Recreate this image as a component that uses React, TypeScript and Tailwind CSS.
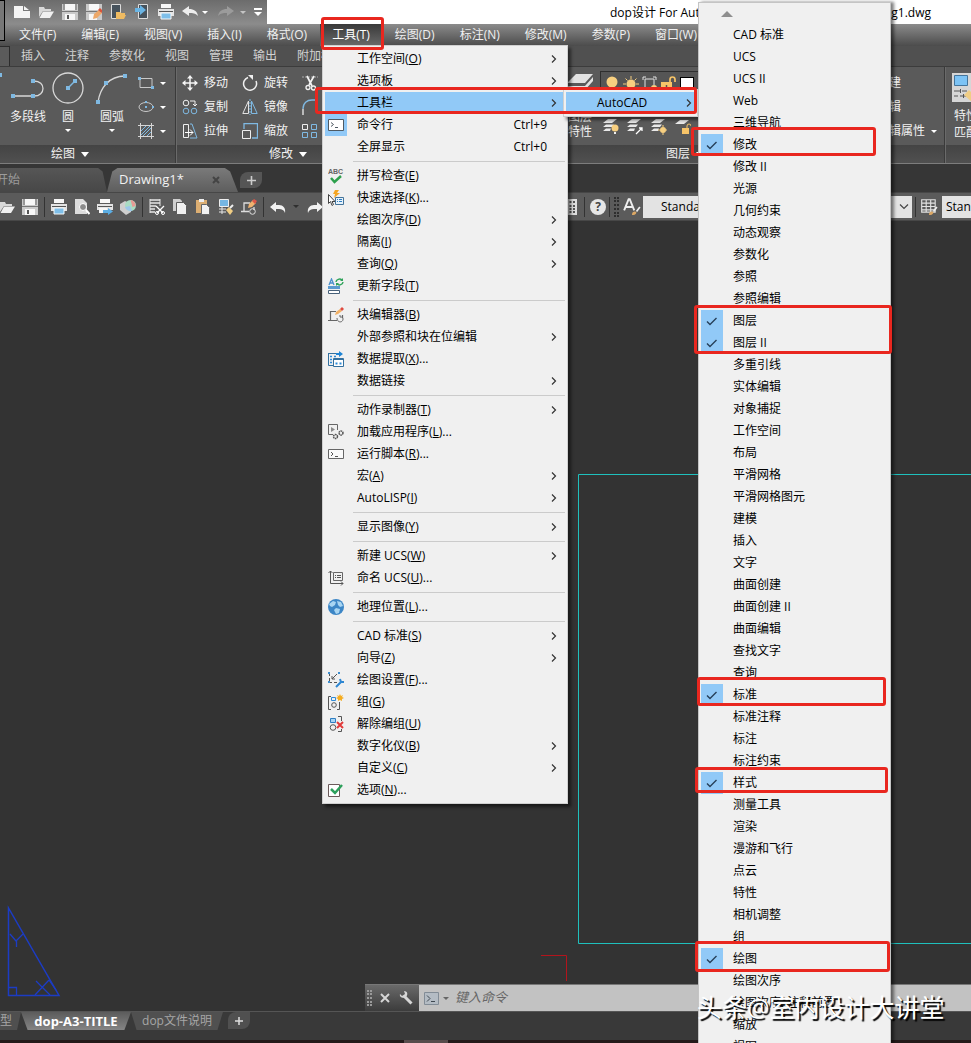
import type { ReactNode } from 'react';
import clsx from 'clsx';

interface MenuEntry {
  label: string;
  icon?: ReactNode;
  shortcut?: string;
  submenu?: boolean;
  active?: boolean;
  checked?: boolean;
}

interface IconProps {
  size?: number;
  children: ReactNode;
}

function Icon({ size = 16, children }: IconProps) {
  return (
    <svg width={size} height={size} viewBox="0 0 16 16" fill="none" className="shrink-0" aria-hidden="true">
      {children}
    </svg>
  );
}

function Caret({ className = 'border-t-white' }: { className?: string }) {
  return <span className={clsx('h-0 w-0 shrink-0 border-x-[3px] border-t-[3px] border-x-transparent', className)} />;
}

/* ---------- Toolbar icons ---------- */

const newIcon = (
  <Icon>
    <path d="M0 2h9v5h7v7H0z" fill="#f4f4f4" />
    <path d="M10 2l5 4h-5z" fill="#f4f4f4" />
  </Icon>
);

const openIcon = (
  <Icon>
    <path d="M1 13V3h5l1 2h6v2H5z" fill="#d8d8d8" />
    <path d="M5 7.500h11L12 14H1.500z" fill="#f0f0f0" />
  </Icon>
);

const saveIcon = (
  <Icon>
    <path d="M0 0h16v16H0z" fill="#c9c9c9" />
    <path d="M3 0h10v6H3z" fill="#f7f7f7" />
    <path d="M0 7.500h16" stroke="#777" />
    <path d="M3 10h10v6H3z" fill="#f7f7f7" />
    <path d="M5 11h2v4H5z" fill="#555" />
    <path d="M2 0v6M14 0v6" stroke="#666" />
  </Icon>
);

const saveAsIcon = (
  <Icon>
    <path d="M0 0h16v16H0z" fill="#c9c9c9" />
    <path d="M3 0h10v6H3z" fill="#f7f7f7" />
    <path d="M0 7.500h16" stroke="#777" />
    <path d="M3 10h8v6H3z" fill="#f7f7f7" />
    <path d="M7 15l1-5 5-4 3 3-5 5z" fill="#eda869" />
    <path d="M12 6l2-2 2 2v3z" fill="#d9533c" />
  </Icon>
);

const mobileOpenIcon = (
  <Icon>
    <path d="M1.500.500h9v14h-9z" fill="#46525c" stroke="#ddd" />
    <path d="M6 15V8h4l1 1h4v2h1l-2 4z" fill="#efbb62" />
  </Icon>
);

const mobileSendIcon = (
  <Icon>
    <path d="M4.500.500h9v14h-9z" fill="#46525c" stroke="#ddd" />
    <path d="M1 4h5V1l6 5-6 5V8H1z" fill="#69b4e4" />
  </Icon>
);

const printIcon = (
  <Icon>
    <path d="M3 0h10v4H3z" fill="#f7f7f7" />
    <path d="M0 5h16v7H0z" fill="#e4e4e4" />
    <path d="M1 7.500h14" stroke="#555" />
    <path d="M3 9h10v6H3z" fill="#7fbfe9" stroke="#f7f7f7" />
  </Icon>
);

const previewIcon = (
  <Icon>
    <path d="M1 0h8l4 4v11H1z" fill="#dcdcdc" />
    <circle cx="9" cy="8" r="3.500" fill="#8a8a8a" stroke="#fff" />
    <path d="M12 11l3.500 4" stroke="#fff" strokeWidth="2" />
  </Icon>
);

const plotIcon = (
  <Icon>
    <path d="M3 0h10v4H3z" fill="#f7f7f7" />
    <path d="M0 5h16v6H0z" fill="#e4e4e4" />
    <path d="M1 7.500h14" stroke="#555" />
    <path d="M2 9h8v5H2z" fill="#f7f7f7" />
    <path d="M6 11h5V9l5 3.500-5 3.500v-2H6z" fill="#5caee4" />
  </Icon>
);

const sphereIcon = (
  <Icon>
    <path d="M0 5l5-3 6 3v8l-5 3-6-5z" fill="#cfcfcf" />
    <circle cx="10.500" cy="6.500" r="5.500" fill="#a9dcc4" />
    <path d="M10.500 1a5.500 5.500 0 0 1 5 6l-3 1z" fill="#e79a94" />
    <path d="M5 8l5-1 2 5a6 6 0 0 1-7-4z" fill="#9cc7ea" />
  </Icon>
);

const cutIcon = (
  <Icon>
    <path d="M1 1h10M1 4h10M1 7h6M1 10h5M1 13h5" stroke="#e6e6e6" strokeWidth="1.500" />
    <path d="M1 0v14M11 0v7" stroke="#e6e6e6" />
    <path d="M7 7l7 7M15 7l-7 7" stroke="#fff" strokeWidth="1.300" />
    <circle cx="8" cy="14" r="1.500" stroke="#fff" />
    <circle cx="14" cy="14" r="1.500" stroke="#fff" />
  </Icon>
);

const copyIcon = (
  <Icon>
    <path d="M1 0h7l2 2v10H1z" fill="#cfcfcf" />
    <path d="M4.500 3.500h7l3 3v9h-10z" fill="#f0f0f0" stroke="#5b5b5b" />
  </Icon>
);

const pasteIcon = (
  <Icon>
    <path d="M1 1h11v13H1z" fill="#dcae72" />
    <path d="M4 0h5v3H4z" fill="#eee" />
    <path d="M6.500 5.500h5l3 3v7h-8z" fill="#f2f2f2" stroke="#666" />
  </Icon>
);

const matchIcon = (
  <Icon>
    <path d="M1.500.500h9v7h-9z" fill="#76b7e3" stroke="#eee" />
    <path d="M1 10h7M1 13h7M4 8v7" stroke="#e8e8e8" />
    <path d="M8 11l3-3 4 4-3 4z" fill="#f0cd84" />
    <path d="M12 9l3-3" stroke="#eee" strokeWidth="2" />
  </Icon>
);

const blockEditIcon = (
  <Icon>
    <path d="M3 12V4h6M0 12.500h8M13 8v3" stroke="#ddd" strokeWidth="1.300" />
    <circle cx="11.500" cy="12.500" r="2.800" stroke="#ddd" />
    <path d="M7 9l1-4 4-4 3 3-4 4z" fill="#efb26f" />
    <path d="M11 2l2-2 3 2-2 3z" fill="#dc5749" />
  </Icon>
);

const undoIcon = (
  <Icon>
    <path d="M0 8l6-5v3h3c4 0 7 3 6 8-1-3-3-4-6-4H6v3z" fill="#f2f2f2" />
  </Icon>
);

const undoQuickIcon = (
  <Icon>
    <path d="M0 7l7-5v3c5 0 8 2 9 7-3-3-5-3-9-3v3z" fill="#ededed" />
  </Icon>
);

const redoQuickIcon = (
  <Icon>
    <path d="M16 7L9 2v3C4 5 1 7 0 12c3-3 5-3 9-3v3z" fill="#9b9b9b" />
  </Icon>
);

const redoIcon = (
  <Icon>
    <path d="M16 8l-6-5v3H7c-4 0-7 3-6 8 1-3 3-4 6-4h3v3z" fill="#f2f2f2" />
  </Icon>
);

const calcIcon = (
  <Icon>
    <path d="M1 0h13v16H1z" fill="#ddd" />
    <path d="M3 3h9M3 7h9M3 10h9M3 13h9" stroke="#555" strokeWidth="2" strokeDasharray="2 1.500" />
  </Icon>
);

const textStyleIcon = (
  <Icon size={18}>
    <path d="M1 11L5 1h1l4 10M2.500 8h6" stroke="#eee" strokeWidth="1.700" />
    <path d="M8 15c0-3 2-3 3-3l1 1c-1 2-2 2-4 2z" fill="#dba765" />
    <path d="M12 12l3-4" stroke="#eee" strokeWidth="1.500" />
  </Icon>
);

const tableStyleIcon = (
  <Icon size={18}>
    <path d="M1.500 1.500h12v11h-12zM1.500 4.500h12M1.500 7.500h12M1.500 10.500h12M5.500 1.500v11M9.500 1.500v11" stroke="#e2e2e2" />
    <path d="M8 15c0-3 2-3 3-3l1 1c-1 2-2 2-4 2z" fill="#dba765" />
    <path d="M12 12l3-4" stroke="#eee" strokeWidth="1.500" />
  </Icon>
);

/* ---------- Ribbon icons ---------- */

const moveIcon = (
  <Icon>
    <path d="M8 1v14M1 8h14" stroke="#f4f4f4" strokeWidth="1.500" />
    <path d="M8 0l3 3.500H5zM8 16l3-3.500H5zM0 8l3.500-3v6zM16 8l-3.500-3v6z" fill="#f4f4f4" />
  </Icon>
);

const copyObjectIcon = (
  <Icon>
    <circle cx="4" cy="4" r="2.800" stroke="#f0f0f0" />
    <circle cx="4" cy="12" r="2.800" stroke="#7fb9e2" />
    <circle cx="12" cy="12" r="2.800" stroke="#7fb9e2" />
    <path d="M8 2h5v5M11 5l2 2 2-2" stroke="#f0f0f0" />
  </Icon>
);

const stretchIcon = (
  <Icon>
    <path d="M1.500 1.500h5v13h-5z" stroke="#eee" />
    <path d="M8 1h2l5 14H8" stroke="#7fb9e2" />
    <path d="M3 9.500h8M8 6.500l3 3-3 3" stroke="#fff" />
  </Icon>
);

const rotateIcon = (
  <Icon>
    <path d="M6 2.500A6.500 6.500 0 1 0 14 6" stroke="#f0f0f0" strokeWidth="1.500" />
    <path d="M6 0h5v5z" fill="#f0f0f0" />
  </Icon>
);

const mirrorIcon = (
  <Icon>
    <path d="M6.500 2v12.500H.800z" stroke="#e2e2e2" />
    <path d="M9.500 2v12.500h5.700z" stroke="#7fb9e2" />
    <path d="M8 0v16" stroke="#7fb9e2" strokeDasharray="2 1" />
  </Icon>
);

const scaleIcon = (
  <Icon>
    <path d="M2 6V.500h13.500V15H10" stroke="#7fb9e2" strokeWidth="1.300" />
    <path d="M.500 7.500h8v8h-8z" stroke="#eee" />
  </Icon>
);

const trimIcon = (
  <Icon>
    <path d="M0 2h16" stroke="#aaa" strokeDasharray="2 1" />
    <path d="M5 1l5 10M12 1L7 10" stroke="#f4f4f4" strokeWidth="1.700" />
    <circle cx="6" cy="12.500" r="2" stroke="#f4f4f4" strokeWidth="1.300" />
    <circle cx="11.500" cy="13" r="2" stroke="#f4f4f4" strokeWidth="1.300" />
  </Icon>
);

const filletIcon = (
  <Icon>
    <path d="M1 10C1 4 5 1 10 1h6" stroke="#7fb9e2" strokeWidth="1.300" />
    <path d="M1 10v6" stroke="#eee" strokeWidth="1.300" />
  </Icon>
);

const arrayIcon = (
  <Icon>
    <path d="M.500 1.500h5v5h-5z" stroke="#eee" />
    <path d="M9.500 1.500h5v5h-5zM.500 9.500h5v5h-5zM9.500 9.500h5v5h-5z" stroke="#7fb9e2" />
  </Icon>
);

const rectangleIcon = (
  <Icon>
    <path d="M2 3.500h12v9H2z" stroke="#c9c9c9" />
    <path d="M0 2h3v3H0zM13 11h3v3h-3z" fill="#7fb9e2" />
  </Icon>
);

const ellipseIcon = (
  <Icon>
    <ellipse cx="8" cy="8" rx="7" ry="4.500" stroke="#c9c9c9" />
    <path d="M7 2h2v2H7zM7 7h2v2H7zM14 7h2v2h-2z" fill="#7fb9e2" />
  </Icon>
);

const hatchIcon = (
  <Icon>
    <path d="M0 2.500h16M0 13.500h16M2.500 0v16M13.500 0v16" stroke="#d6d6d6" />
    <path d="M3 8l5-5M3 12l9-9M5 13l8-8M9 13l4-4" stroke="#7fb9e2" />
  </Icon>
);

const bulbIcon = (
  <Icon>
    <circle cx="8" cy="6" r="5.500" fill="#f7cf80" />
    <path d="M6 12h4v3H6z" fill="#e8e8e8" />
  </Icon>
);

const sunIcon = (
  <Icon>
    <circle cx="8" cy="8" r="4.500" fill="#f7cf80" />
    <path d="M8 0v3M8 13v3M0 8h3M13 8h3M2.500 2.500l2 2M11.500 11.500l2 2M13.500 2.500l-2 2M4.500 11.500l-2 2" stroke="#f7cf80" />
  </Icon>
);

const viewportSunIcon = (
  <Icon>
    <path d="M3 3h9v6M3 3v9h5" stroke="#e3e3e3" />
    <path d="M1 4V1h3M11 1h3v3M1 11v3h3" stroke="#e3e3e3" />
    <circle cx="12" cy="12" r="3" fill="#f7cf80" />
  </Icon>
);

const lockIcon = (
  <Icon>
    <path d="M0 6h11v9H0z" fill="#f7c468" />
    <path d="M9 6V3.500a2.500 2.500 0 0 1 5 0V6" stroke="#f7c468" strokeWidth="1.700" />
    <path d="M5.500 9v3" stroke="#555" strokeWidth="1.500" />
  </Icon>
);

function LayerIcon({ children }: { children?: ReactNode }) {
  return (
    <Icon>
      <path d="M5 0h9l-5 4H0zM3 5.500h8l-2 2.500H0zM3 9.500h5l-1 2.500H0z" fill="#e9e9e9" />
      {children}
    </Icon>
  );
}

/* ---------- Tools menu icons ---------- */

const promptIcon = (
  <Icon>
    <path d="M.500 2.500h15v11H.500z" fill="#fff" stroke="#4f5a63" />
    <path d="M3 5.500l2.500 2L3 9.500M7 10.500h3" stroke="#4f5a63" />
  </Icon>
);

const scriptIcon = (
  <Icon>
    <path d="M.500 3.500h15v9H.500z" fill="#fafafa" stroke="#666" />
    <path d="M3 6l2 2-2 2M7 10.500h3" stroke="#555" />
  </Icon>
);

const spellIcon = (
  <Icon>
    <text x="0" y="6" fontSize="7" fontWeight="700" fill="#666" fontFamily="Liberation Sans, sans-serif">
      ABC
    </text>
    <path d="M3 10l3.500 4L13 8" stroke="#2da04c" strokeWidth="2.500" />
  </Icon>
);

const quickSelectIcon = (
  <Icon>
    <path d="M7 0h4L9 3h3L6 8l1-4H5z" fill="#f5a623" />
    <path d="M.500 4.500v9l2-2 1.500 4 1.500-1-1.500-3h3z" fill="#fff" stroke="#444" />
    <path d="M7.500 7.500h8v7h-8z" fill="#e6f2fb" stroke="#44749b" />
    <path d="M9 9.500h1M11 9.500h3M9 11.500h1M11 11.500h3" stroke="#2e7ec2" />
  </Icon>
);

const updateFieldIcon = (
  <Icon>
    <path d="M1 7l2.500-6L6 7M2 5h3" stroke="#4a90cc" strokeWidth="1.300" />
    <path d="M8 4a3.500 3 0 0 1 6-2M15 4a3.500 3 0 0 1-6 2" stroke="#2fa35a" strokeWidth="1.400" />
    <path d="M15 0v3h-3zM8 8V5h3z" fill="#2fa35a" />
    <path d="M0 8h12v3H0z" fill="#5b9bd0" />
    <path d="M.500 12.500h11v3H.500z" fill="#fff" stroke="#47617a" />
  </Icon>
);

const blockMenuIcon = (
  <Icon>
    <path d="M2.500 13V4.500H8M0 13.500h9M14.500 8v3" stroke="#666" strokeWidth="1.200" />
    <path d="M9 11c0 5 6 5 6 1 0-2-1-2-3-2v-2" stroke="#666" />
    <path d="M7 8l1-3 4-3 2 2-4 3z" fill="#f2b166" />
    <path d="M12 2l2-2 2 2-2 2z" fill="#e04a3f" />
  </Icon>
);

const extractIcon = (
  <Icon>
    <path d="M.500 2v12.500H5M.500 2.500h11" stroke="#33709f" />
    <path d="M2 5.500h2M6 5.500h2M2 8.500h2M2 11.500h2" stroke="#2e8bd8" strokeWidth="1.500" />
    <path d="M8 2h3V0l4 3-4 3V4H8z" fill="#1e84d4" />
    <path d="M5.500 7.500h10v8h-10z" fill="#fff" stroke="#33709f" />
    <path d="M5 8h11v1H5z" fill="#33709f" />
    <path d="M7.500 12.500h2M11.500 12.500h2" stroke="#2e8bd8" strokeWidth="2" />
  </Icon>
);

const loadAppIcon = (
  <Icon>
    <path d="M5 10.500H.500V.500h9V6" stroke="#666" />
    <path d="M3 3l4 2.500L3 8z" fill="#8a8a8a" />
    <circle cx="7.500" cy="12.500" r="2" stroke="#555" strokeWidth="1.500" strokeDasharray="1.500 .500" />
    <circle cx="13" cy="9" r="2" stroke="#555" strokeWidth="1.500" strokeDasharray="1.500 .500" />
  </Icon>
);

const namedUcsIcon = (
  <Icon>
    <path d="M2.500 1v12.500H15M.500 3l2-2 2 2M13 11.500l2 2-2 2" stroke="#555" />
    <path d="M5.500 2.500h9v8h-9z" stroke="#666" />
    <path d="M7 5.500h1M9 5.500h4M7 7.500h1M9 7.500h4" stroke="#555" />
  </Icon>
);

const globeIcon = (
  <Icon>
    <circle cx="8" cy="8" r="8" fill="#3c86c6" />
    <path d="M1 5l4-3 3 1-1 3-3 2-2-1zM9 2l4 1 2 4-3 1-2-2zM8 9l4 1-1 4-3 1-2-4z" fill="#a8d5f2" />
  </Icon>
);

const draftSettingsIcon = (
  <Icon>
    <path d="M1.500 1v9M1 10.500h8" stroke="#555" strokeDasharray="3 2" />
    <path d="M9 2L4 7M4 4v3h3" stroke="#555" />
    <path d="M0 0h2v2H0zM10 0h2v2h-2zM0 9h2v2H0z" fill="#3f8fd0" />
    <path d="M8 15l5-5M12 7l1 3h3" stroke="#2f87d2" strokeWidth="2" />
  </Icon>
);

const groupIcon = (
  <Icon>
    <path d="M3 2.500H.500v13H3M9 15.500h2.500V8" stroke="#555" />
    <path d="M3.500 3.500h4v3h-4z" stroke="#2e8bd8" />
    <circle cx="6" cy="11" r="2.300" stroke="#555" />
    <path d="M12 0l1 2 2-1-1 2 2 1-2 1v2l-2-1-2 1V5L8 4l2-1-1-2 2 1z" fill="#f5ad20" />
  </Icon>
);

const ungroupIcon = (
  <Icon>
    <path d="M10 .500h3.500V5M10 15.500h3.500V13" stroke="#555" />
    <path d="M2.500 2.500h5v4h-5z" fill="#a8d5f5" stroke="#2e7ec2" />
    <circle cx="5" cy="11.500" r="2.800" stroke="#555" />
    <path d="M9 6l6 6M15 6l-6 6" stroke="#e23b3b" strokeWidth="2" />
  </Icon>
);

const optionsIcon = (
  <Icon>
    <path d="M.500 2.500h11v12H.500z" fill="#fff" stroke="#6b5a5a" />
    <path d="M3 7l4 4 7-8" stroke="#2da05c" strokeWidth="2.500" />
  </Icon>
);

/* ---------- Data ---------- */

const menuTitles = [
  '文件(F)',
  '编辑(E)',
  '视图(V)',
  '插入(I)',
  '格式(O)',
  '工具(T)',
  '绘图(D)',
  '标注(N)',
  '修改(M)',
  '参数(P)',
  '窗口(W)',
];

const ribbonTabs = ['插入', '注释', '参数化', '视图', '管理', '输出', '附加模块'];

// Each inner list is one group, groups are split by a separator line
const toolsMenu: MenuEntry[][] = [
  [
    { label: '工作空间(O)', submenu: true },
    { label: '选项板', submenu: true },
    { label: '工具栏', submenu: true, active: true },
    { label: '命令行', shortcut: 'Ctrl+9', icon: promptIcon, checked: true },
    { label: '全屏显示', shortcut: 'Ctrl+0' },
  ],
  [
    { label: '拼写检查(E)', icon: spellIcon },
    { label: '快速选择(K)...', icon: quickSelectIcon },
    { label: '绘图次序(D)', submenu: true },
    { label: '隔离(I)', submenu: true },
    { label: '查询(Q)', submenu: true },
    { label: '更新字段(T)', icon: updateFieldIcon },
  ],
  [
    { label: '块编辑器(B)', icon: blockMenuIcon },
    { label: '外部参照和块在位编辑', submenu: true },
    { label: '数据提取(X)...', icon: extractIcon },
    { label: '数据链接', submenu: true },
  ],
  [
    { label: '动作录制器(T)', submenu: true },
    { label: '加载应用程序(L)...', icon: loadAppIcon },
    { label: '运行脚本(R)...', icon: scriptIcon },
    { label: '宏(A)', submenu: true },
    { label: 'AutoLISP(I)', submenu: true },
  ],
  [{ label: '显示图像(Y)', submenu: true }],
  [
    { label: '新建 UCS(W)', submenu: true },
    { label: '命名 UCS(U)...', icon: namedUcsIcon },
  ],
  [{ label: '地理位置(L)...', icon: globeIcon }],
  [
    { label: 'CAD 标准(S)', submenu: true },
    { label: '向导(Z)', submenu: true },
    { label: '绘图设置(F)...', icon: draftSettingsIcon },
    { label: '组(G)', icon: groupIcon },
    { label: '解除编组(U)', icon: ungroupIcon },
    { label: '数字化仪(B)', submenu: true },
    { label: '自定义(C)', submenu: true },
    { label: '选项(N)...', icon: optionsIcon },
  ],
];

const toolbarNames = [
  'CAD 标准', 'UCS', 'UCS II', 'Web', '三维导航', '修改', '修改 II', '光源', '几何约束', '动态观察',
  '参数化', '参照', '参照编辑', '图层', '图层 II', '多重引线', '实体编辑', '对象捕捉', '工作空间', '布局',
  '平滑网格', '平滑网格图元', '建模', '插入', '文字', '曲面创建', '曲面创建 II', '曲面编辑', '查找文字', '查询',
  '标准', '标准注释', '标注', '标注约束', '样式', '测量工具', '渲染', '漫游和飞行', '点云', '特性',
  '相机调整', '组', '绘图', '绘图次序', '绘图次序, 注释前置', '缩放', '视图',
];

const visibleToolbars = ['修改', '图层', '图层 II', '标准', '样式', '绘图'];

const highlightBoxes = [
  'left-[321px] top-[17px] w-[63px] h-[33px]',
  'left-[315px] top-[87px] w-[382px] h-[27px]',
  'left-[691px] top-[127px] w-[185px] h-[29px]',
  'left-[694px] top-[305px] w-[198px] h-[49px]',
  'left-[697px] top-[677px] w-[189px] h-[29px]',
  'left-[695px] top-[767px] w-[193px] h-[26px]',
  'left-[695px] top-[941px] w-[195px] h-[31px]',
];

/* ---------- Menus ---------- */

// Underlines the access key in labels such as "查询(Q)"
function AccessLabel({ text }: { text: string }) {
  const match = text.match(/^(.*\()([A-Z])(\).*)$/);
  if (!match) return <>{text}</>;
  return (
    <>
      {match[1]}
      <u>{match[2]}</u>
      {match[3]}
    </>
  );
}

function Chevron() {
  return (
    <svg width="6" height="8" viewBox="0 0 6 8" fill="none" className="shrink-0" aria-hidden="true">
      <path d="M1 .500L4.500 4 1 7.500" stroke="#333" strokeWidth="1.200" />
    </svg>
  );
}

function MenuRow({ entry }: { entry: MenuEntry }) {
  return (
    <button
      role="menuitem"
      className={clsx('flex h-[22px] w-full items-center text-left', entry.active && 'bg-[#91c9f7]')}
    >
      <span className={clsx('flex h-full w-[22px] items-center justify-center', entry.checked && 'bg-[#91c9f7]')}>
        {entry.icon}
      </span>
      <span className="ml-[10px] flex-1">
        <AccessLabel text={entry.label} />
      </span>
      {entry.shortcut && <span className="pr-[18px]">{entry.shortcut}</span>}
      {entry.submenu && (
        <span className="pr-2">
          <Chevron />
        </span>
      )}
    </button>
  );
}

function ToolsMenu() {
  return (
    <div
      role="menu"
      className="absolute left-[322px] top-[45px] w-[246px] border border-[#d0d0d0] bg-[#f0f0f0] p-[2px] shadow-[3px_3px_3px_rgba(0,0,0,0.5)]"
    >
      {toolsMenu.map((group, index) => (
        <div key={index}>
          {index > 0 && (
            <div className="ml-7 flex h-[7px] items-center">
              <div className="h-px w-full bg-[#cbcbcb]" />
            </div>
          )}
          {group.map((entry) => (
            <MenuRow key={entry.label} entry={entry} />
          ))}
        </div>
      ))}
    </div>
  );
}

function AutoCadMenu() {
  return (
    <div
      role="menu"
      className="absolute left-[563px] top-[89px] w-[135px] border border-[#d0d0d0] bg-[#f0f0f0] p-[2px] shadow-[3px_3px_3px_rgba(0,0,0,0.5)]"
    >
      <button role="menuitem" className="flex h-[22px] w-full items-center bg-[#91c9f7] pl-[31px] pr-[3px] text-left">
        <span className="flex-1">AutoCAD</span>
        <Chevron />
      </button>
    </div>
  );
}

function ToolbarListMenu() {
  return (
    <div
      role="menu"
      className="absolute bottom-0 left-[698px] top-[2px] w-[193px] overflow-hidden border border-b-0 border-[#c4c4c4] bg-[#f0f0f0] px-[2px] shadow-[3px_0_3px_rgba(0,0,0,0.5)]"
    >
      <div className="flex h-[21px] items-center pl-5">
        <span className="h-0 w-0 border-x-[6px] border-b-[6px] border-x-transparent border-b-[#8e8e8e]" />
      </div>
      {toolbarNames.map((name) => {
        const checked = visibleToolbars.includes(name);
        return (
          <button
            key={name}
            role="menuitemcheckbox"
            aria-checked={checked}
            className="flex h-[22px] w-full items-center text-left"
          >
            <span className={clsx('flex h-full w-[22px] items-center justify-center', checked && 'bg-[#91c9f7]')}>
              {checked && (
                <svg width="12" height="9" viewBox="0 0 12 9" fill="none" aria-hidden="true">
                  <path d="M1 4.500L4 7.500 10.500 1" stroke="#27405a" strokeWidth="1.400" />
                </svg>
              )}
            </span>
            <span className="ml-[10px] whitespace-nowrap">{name}</span>
          </button>
        );
      })}
    </div>
  );
}

/* ---------- Window parts ---------- */

function IconButton({ label, children }: { label: string; children: ReactNode }) {
  return (
    <button aria-label={label} className="flex w-6 shrink-0 items-center justify-center">
      {children}
    </button>
  );
}

function TitleBar() {
  return (
    <header className="flex h-6 bg-white">
      <div className="flex w-[267px] shrink-0 items-center bg-gradient-to-b from-[#6c6c6c] to-[#8c8c8c] pl-[10px]">
        <IconButton label="新建">{newIcon}</IconButton>
        <IconButton label="打开">{openIcon}</IconButton>
        <IconButton label="保存">{saveIcon}</IconButton>
        <IconButton label="另存为">{saveAsIcon}</IconButton>
        <IconButton label="从移动设备打开">{mobileOpenIcon}</IconButton>
        <IconButton label="保存到移动设备">{mobileSendIcon}</IconButton>
        <IconButton label="打印">{printIcon}</IconButton>
        <IconButton label="放弃">{undoQuickIcon}</IconButton>
        <Caret />
        <span className="w-1.5" />
        <IconButton label="重做">{redoQuickIcon}</IconButton>
        <span className="w-0.5" />
        <Caret className="border-t-[#c4c4c4]" />
        <button aria-label="自定义快速访问工具栏" className="ml-2 flex flex-col items-center gap-0.5">
          <span className="h-0.5 w-2 bg-white" />
          <span className="h-0 w-0 border-x-4 border-t-4 border-x-transparent border-t-white" />
        </button>
      </div>
      <div className="ml-[343px] flex w-[321px] shrink-0 items-center justify-between pt-px text-black">
        <span>dop设计 For AutoCAD</span>
        <span>Drawing1.dwg</span>
      </div>
    </header>
  );
}

function MenuBar() {
  return (
    <nav className="flex h-[22px] gap-px bg-gradient-to-b from-[#8c8c8c] to-[#4c4c4c] pl-[7px] text-[#f0f0f0]">
      {menuTitles.map((title) => (
        <button
          key={title}
          className={clsx(
            'shrink-0 px-3',
            title === '工具(T)' && 'bg-gradient-to-b from-[#3a3a3a] to-[#6a6a6a] text-white',
          )}
        >
          {title}
        </button>
      ))}
    </nav>
  );
}

function RibbonPanel({ title, width, children }: { title?: string; width: string; children?: ReactNode }) {
  return (
    <section className={clsx('flex shrink-0 flex-col border-r border-[#3a3a3a]', width)}>
      <div className="flex h-[78px] gap-2 overflow-hidden border-l border-[#6a6a6a] pt-1">{children}</div>
      <div className="flex flex-1 items-center justify-center gap-1.5 border-l border-[#6a6a6a] bg-gradient-to-b from-[#444] to-[#505050]">
        {title && (
          <>
            {title}
            <span className="h-0 w-0 border-x-4 border-t-[5px] border-x-transparent border-t-white" />
          </>
        )}
      </div>
    </section>
  );
}

function ToolButton({ icon, label, caret }: { icon?: ReactNode; label?: string; caret?: boolean }) {
  return (
    <button className="flex h-6 items-center gap-1.5 whitespace-nowrap">
      {icon}
      {label}
      {caret && <Caret />}
    </button>
  );
}

function Ribbon() {
  return (
    <>
      <div className="flex h-[21px] items-center border-b border-[#3c3c3c] bg-[#505050] text-[#d2d2d2]">
        <div className="h-full w-[10px] shrink-0 border-r border-t border-[#2c2c2c] bg-[#5b5b5b]" />
        <div className="flex gap-5 pl-[11px]">
          {ribbonTabs.map((tab) => (
            <button key={tab} className="shrink-0">
              {tab}
            </button>
          ))}
        </div>
      </div>
      <div className="flex h-[97px] overflow-hidden border-b border-[#7d7d7d] bg-[#5a5a5a] text-[#f2f2f2]">
        {/* The first panel starts left of the window, with the line tool mostly out of view */}
        <RibbonPanel title="绘图" width="-ml-9 w-[212px]">
          <button aria-label="直线" className="flex w-[37px] shrink-0 flex-col items-end">
            <svg width="32" height="36" viewBox="0 0 32 36" fill="none" aria-hidden="true">
              <path d="M2 33L30 5" stroke="#d8d8d8" strokeWidth="1.300" />
              <path d="M0 31h4v4H0zM28 2h4v4h-4z" fill="#7fb9e2" />
            </svg>
          </button>
          <button className="-ml-2 flex w-[44px] shrink-0 flex-col items-end whitespace-nowrap">
            <svg width="35" height="36" viewBox="0 0 35 36" fill="none" aria-hidden="true">
              <path d="M2 25h21c12 0 12-15 0-15" stroke="#d8d8d8" strokeWidth="1.300" />
              <path d="M0 23h4v4H0zM20 23h4v4h-4zM20 8h4v4h-4z" fill="#7fb9e2" />
            </svg>
            <span className="mt-0.5">多段线</span>
          </button>
          <button className="-ml-0.5 flex w-8 shrink-0 flex-col items-center">
            <svg width="32" height="36" viewBox="0 0 32 36" fill="none" aria-hidden="true">
              <circle cx="16" cy="17" r="15" stroke="#d8d8d8" strokeWidth="1.300" />
              <path d="M16 17l7-7" stroke="#7fb9e2" strokeWidth="1.500" />
              <path d="M14 15h4v4h-4zM21 8h4v4h-4z" fill="#7fb9e2" />
            </svg>
            <span className="mb-1 mt-0.5">圆</span>
            <Caret />
          </button>
          <button className="ml-1 flex w-8 shrink-0 flex-col items-center">
            <svg width="32" height="36" viewBox="0 0 32 36" fill="none" aria-hidden="true">
              <path d="M2 31C4 17 13 5 29 5" stroke="#d8d8d8" strokeWidth="1.300" />
              <path d="M0 29h4v4H0zM8 10h4v4H8zM27 3h4v4h-4z" fill="#7fb9e2" />
            </svg>
            <span className="mb-1 mt-0.5">圆弧</span>
            <Caret />
          </button>
          <div className="ml-0.5 flex flex-col">
            <ToolButton icon={rectangleIcon} caret />
            <ToolButton icon={ellipseIcon} caret />
            <ToolButton icon={hatchIcon} caret />
          </div>
        </RibbonPanel>
        <RibbonPanel title="修改" width="w-[224px]">
          <div className="ml-[5px] flex gap-[14px]">
            <div className="flex flex-col">
              <ToolButton icon={moveIcon} label="移动" />
              <ToolButton icon={copyObjectIcon} label="复制" />
              <ToolButton icon={stretchIcon} label="拉伸" />
            </div>
            <div className="flex flex-col">
              <ToolButton icon={rotateIcon} label="旋转" />
              <ToolButton icon={mirrorIcon} label="镜像" />
              <ToolButton icon={scaleIcon} label="缩放" />
            </div>
            <div className="flex flex-col">
              <ToolButton icon={trimIcon} />
              <ToolButton icon={filletIcon} />
              <ToolButton icon={arrayIcon} />
            </div>
          </div>
        </RibbonPanel>
        <RibbonPanel width="w-[160px]" />
        <RibbonPanel title="图层" width="w-[250px]">
          <button className="ml-[7px] flex w-6 shrink-0 flex-col items-center leading-[15px]">
            <svg width="26" height="38" viewBox="0 0 26 38" fill="none" aria-hidden="true">
              <path d="M9 3h17l-8 9H0zM0 15h18l8-9v4l-8 9H0z" fill="#e2e2e2" />
            </svg>
            <span>图层特性</span>
          </button>
          <div className="flex flex-col gap-[22px]">
            <div className="flex h-[26px] w-[200px] items-center gap-[3px] border border-[#2e2e2e] bg-[#555] pl-[3px]">
              {bulbIcon}
              {sunIcon}
              {viewportSunIcon}
              {lockIcon}
              <span className="h-[14px] w-[14px] border border-black bg-white" />
            </div>
            <div className="flex gap-2 pl-[3px]">
              <LayerIcon>
                <circle cx="12" cy="9" r="3.500" fill="#f7cf80" />
                <path d="M11 13h2v2h-2z" fill="#eee" />
              </LayerIcon>
              <LayerIcon>
                <path d="M9 15l6-6M12 9h3v3" stroke="#fff" strokeWidth="1.300" />
              </LayerIcon>
              <LayerIcon>
                <circle cx="12" cy="11" r="3" fill="#f7cf80" />
                <path d="M12 6v2M12 14v2M7 11h2M15 11h1" stroke="#f7cf80" />
              </LayerIcon>
              <Icon>
                <path d="M5 1h9l-5 4H0z" fill="#e9e9e9" />
                <path d="M7 9h7v6H7z" fill="#f7c468" />
                <path d="M12 9V7a2 2 0 0 1 4 0" stroke="#f7c468" />
              </Icon>
            </div>
          </div>
        </RibbonPanel>
        <RibbonPanel width="w-[135px]">
          <div className="ml-[66px] flex flex-col">
            <ToolButton label="创建" />
            <ToolButton label="编辑" />
            <ToolButton label="编辑属性" caret />
          </div>
        </RibbonPanel>
        <RibbonPanel width="w-[160px]">
          <button className="ml-1.5 flex flex-col leading-[17px]">
            <svg width="34" height="32" viewBox="0 0 34 32" fill="none" aria-hidden="true">
              <path d="M0 2h30v29H0z" fill="#d6d6d6" />
              <path d="M2.500 4.500h13v10h-13z" fill="#7cc3f5" stroke="#44749b" />
              <path d="M2 20h6M10 20h5M2 25h4M8 25h8M8.500 18v4M11.500 23v4" stroke="#555" />
              <path d="M12 24l5-5 8 8-5 4z" fill="#f0cd84" />
            </svg>
            <span className="ml-0.5 mt-1 text-left">
              特性
              <br />
              匹配
            </span>
          </button>
        </RibbonPanel>
      </div>
    </>
  );
}

function FileTabs() {
  return (
    <div className="flex h-[28px] items-end bg-[#363636] text-[13px]">
      <button className="-ml-1 h-6 w-[111px] bg-gradient-to-b from-[#565656] to-[#474747] text-left text-xs text-[#9c9c9c] [clip-path:polygon(0_0,92%_0,96%_15%,100%_100%,0_100%)]">
        开始
      </button>
      <div className="flex h-6 w-[131px] items-center bg-gradient-to-b from-[#7a7a7a] to-[#5e5e5e] pl-[12px] pr-[18px] text-[#f2f2f2] [clip-path:polygon(4%_15%,8%_0,90%_0,94%_15%,100%_100%,0_100%)]">
        <button className="flex-1 text-left">Drawing1*</button>
        <button aria-label="关闭">
          <svg width="8" height="8" viewBox="0 0 8 8" aria-hidden="true">
            <path d="M1 1l6 6M7 1L1 7" stroke="#444" strokeWidth="2" />
          </svg>
        </button>
      </div>
      <button
        aria-label="新图形"
        className="mb-1 ml-0.5 flex h-4 w-[22px] items-center justify-center rounded-br-lg rounded-tl-lg bg-[#555]"
      >
        <svg width="9" height="9" viewBox="0 0 9 9" aria-hidden="true">
          <path d="M4.500 0v9M0 4.500h9" stroke="#ccc" strokeWidth="1.600" />
        </svg>
      </button>
    </div>
  );
}

function ToolbarButton({ label, children }: { label: string; children: ReactNode }) {
  return (
    <button aria-label={label} className="flex w-[23px] shrink-0 items-center justify-center">
      {children}
    </button>
  );
}

function Divider({ className }: { className?: string }) {
  return <span className={clsx('h-5 w-px shrink-0 bg-[#333]', className)} />;
}

function StandardToolbar() {
  return (
    <div className="flex h-[29px] items-center overflow-hidden border-y border-[#474747] bg-[#5b5b5b]">
      <div className="-ml-[5px] flex w-[564px] shrink-0 items-center">
        <ToolbarButton label="打开">{openIcon}</ToolbarButton>
        <ToolbarButton label="保存">{saveIcon}</ToolbarButton>
        <Divider className="ml-[3px] mr-0.5" />
        <ToolbarButton label="打印">{printIcon}</ToolbarButton>
        <ToolbarButton label="打印预览">{previewIcon}</ToolbarButton>
        <ToolbarButton label="发布">{plotIcon}</ToolbarButton>
        <ToolbarButton label="三维打印">{sphereIcon}</ToolbarButton>
        <Divider className="ml-[3px] mr-0.5" />
        <ToolbarButton label="剪切">{cutIcon}</ToolbarButton>
        <ToolbarButton label="复制">{copyIcon}</ToolbarButton>
        <ToolbarButton label="粘贴">{pasteIcon}</ToolbarButton>
        <ToolbarButton label="特性匹配">{matchIcon}</ToolbarButton>
        <ToolbarButton label="块编辑器">{blockEditIcon}</ToolbarButton>
        <Divider className="ml-[3px] mr-0.5" />
        <ToolbarButton label="放弃">{undoIcon}</ToolbarButton>
        <Caret className="ml-1 mr-1 border-t-[#2f2f2f]" />
        <ToolbarButton label="重做">{redoIcon}</ToolbarButton>
      </div>
      <ToolbarButton label="快速计算器">{calcIcon}</ToolbarButton>
      <Divider className="ml-0.5" />
      <button
        aria-label="帮助"
        className="ml-[5px] flex h-4 w-4 shrink-0 items-center justify-center rounded-full bg-[#e6e6e6] text-xs font-bold text-[#444]"
      >
        ?
      </button>
      <Divider className="ml-[3px]" />
      <span className="ml-1 h-5 w-[5px] shrink-0 border-x-2 border-dotted border-[#2e2e2e]" />
      <span className="ml-1 shrink-0">{textStyleIcon}</span>
      <select
        aria-label="文字样式"
        className="ml-0.5 h-[22px] w-[130px] shrink-0 appearance-none bg-[#e3e3e3] pl-[18px] text-black"
      >
        <option>Standard</option>
      </select>
      <div className="ml-3 flex h-[22px] w-[127px] shrink-0 items-center bg-[#e3e3e3]">
        <select aria-label="标注样式" className="h-full flex-1 appearance-none pl-2 text-black">
          <option>ISO-25</option>
        </select>
        <svg width="16" height="6" viewBox="0 0 16 6" fill="none" aria-hidden="true">
          <path d="M4 .500L8 4.500l4-4" stroke="#444" strokeWidth="1.200" />
        </svg>
      </div>
      <Divider className="ml-[3px]" />
      <span className="ml-1 shrink-0">{tableStyleIcon}</span>
      <select
        aria-label="表格样式"
        className="ml-1 h-[22px] w-[130px] shrink-0 appearance-none bg-[#e3e3e3] pl-1 text-black"
      >
        <option>Standard</option>
      </select>
    </div>
  );
}

function DrawingArea() {
  return (
    <main className="relative flex flex-1 flex-col bg-[#333]">
      <svg className="absolute inset-0 h-full w-full" fill="none" aria-hidden="true">
        <path d="M1600 253.500H578.500v469H1600" stroke="#1fc0bd" />
        <path d="M541 734.500h25.500V760" stroke="#b3141c" />
        {/* UCS triangle */}
        <path d="M8.500 687v87.500H59z" stroke="#1c3cc4" strokeWidth="1.500" />
        <path
          d="M10 713l6 7 7-7M16.500 720v6M8.500 766.500h8v8M36 760l14 14M49 759l-14 15M49 759l7 10"
          stroke="#1c3cc4"
          strokeWidth="1.300"
        />
      </svg>
      <div className="relative ml-[365px] mt-auto flex h-[27px] border-t border-[#777] bg-[#c2c2c2]">
        <div className="flex w-[54px] shrink-0 items-center gap-2 bg-gradient-to-b from-[#6a6a6a] to-[#3c3c3c] pl-0.5">
          <span className="h-4 w-[5px] border-x-2 border-dotted border-[#9a9a9a]" />
          <button aria-label="关闭命令行">
            <svg width="10" height="10" viewBox="0 0 10 10" aria-hidden="true">
              <path d="M1 1l8 8M9 1L1 9" stroke="#d6d6d6" strokeWidth="2" />
            </svg>
          </button>
          <button aria-label="自定义">
            <Icon>
              <path d="M6 6l7.500 7.500" stroke="#d6d6d6" strokeWidth="3" />
              <path d="M2 4l2 2 3-2-1-3c4 0 4 4 2 6-3 2-7 0-6-3z" fill="#d6d6d6" />
            </Icon>
          </button>
        </div>
        <div className="flex flex-1 items-center gap-1 pl-[5px]">
          <svg width="15" height="13" viewBox="0 0 15 13" fill="none" aria-hidden="true">
            <path d="M.500.500h14v12H.500z" fill="#b4bcc4" stroke="#828c96" />
            <path d="M3 3.500l3 3-3 3M7 9.500h4" stroke="#3f4850" />
          </svg>
          <Caret className="border-t-[#666]" />
          <input
            aria-label="命令"
            placeholder="键入命令"
            className="ml-0.5 min-w-0 flex-1 bg-transparent text-[13px] italic outline-none placeholder:text-[#666]"
          />
        </div>
      </div>
    </main>
  );
}

function LayoutTabs() {
  return (
    <footer className="bg-[#393939]">
      <div className="flex h-[29px] items-start overflow-hidden border-t border-[#555] text-[#a6a6a6]">
        <button className="-ml-3 h-[18px] w-[33px] bg-[#4f4f4f] text-left leading-[18px] [clip-path:polygon(0_0,100%_0,88%_100%,0_100%)]">
          模型
        </button>
        <button className="h-[18px] w-[110px] bg-gradient-to-b from-[#5c5c5c] to-[#858585] text-[13px] font-bold leading-[18px] text-white [clip-path:polygon(0_0,100%_0,94%_100%,6%_100%)]">
          dop-A3-TITLE
        </button>
        <button className="h-[18px] w-[92px] bg-[#505050] leading-[18px] [clip-path:polygon(0_0,100%_0,94%_100%,6%_100%)]">
          dop文件说明
        </button>
        <button
          aria-label="新建布局"
          className="ml-[5px] flex h-[17px] w-[22px] items-center justify-center rounded-br-lg rounded-tl-lg bg-[#505050]"
        >
          <svg width="8" height="8" viewBox="0 0 8 8" aria-hidden="true">
            <path d="M4 0v8M0 4h8" stroke="#ddd" strokeWidth="1.500" />
          </svg>
        </button>
      </div>
      <div className="h-[3px] bg-[#241a1a] pl-[404px]">
        <div className="h-full w-11 bg-[#584c4c]" />
      </div>
    </footer>
  );
}

export default function App() {
  return (
    <div className="relative flex min-h-screen flex-col overflow-hidden bg-[#333] font-['Open_Sans','Noto_Sans_CJK_SC',sans-serif] text-xs">
      <TitleBar />
      <MenuBar />
      <Ribbon />
      <FileTabs />
      <StandardToolbar />
      <DrawingArea />
      <LayoutTabs />

      {/* Edge of the application button */}
      <div className="absolute left-0 top-0 h-[41px] w-[5px] border-b border-r border-t border-black bg-[#777]" />

      <ToolsMenu />
      <AutoCadMenu />
      <ToolbarListMenu />

      {highlightBoxes.map((box) => (
        <div key={box} className={clsx('pointer-events-none absolute rounded-[3px] border-[3px] border-[#e9271f]', box)} />
      ))}

      <p className="pointer-events-none absolute bottom-5 left-[697px] whitespace-nowrap text-[25px] leading-8 text-white [text-shadow:2px_2px_1px_#000]">
        头条@室内设计大讲堂
      </p>
    </div>
  );
}
